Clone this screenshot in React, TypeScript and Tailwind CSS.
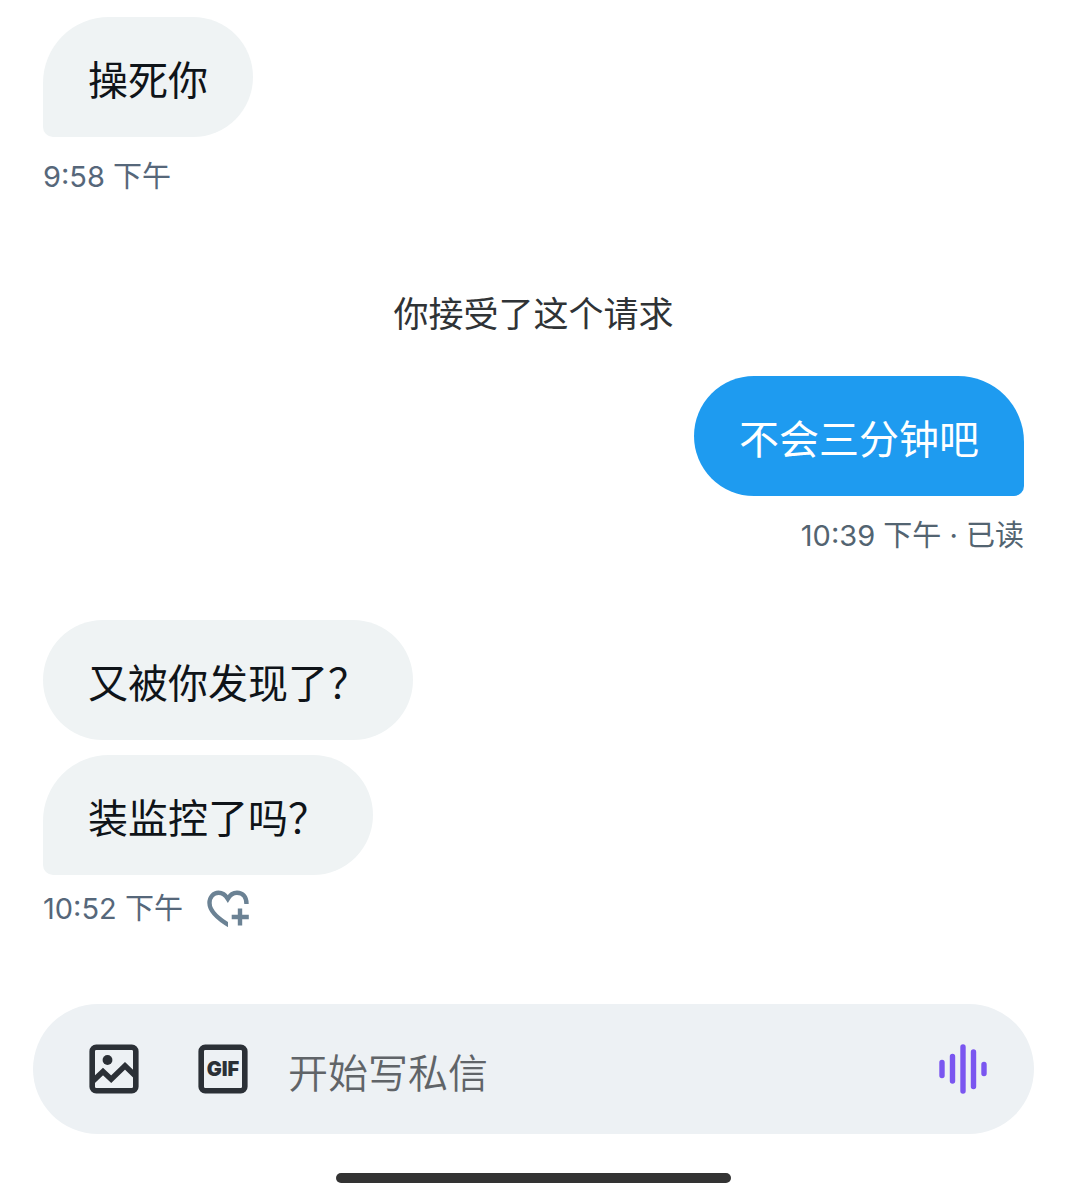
import React from "react";

type BubbleProps = { text: string; shape: "leftTail" | "rightTail" | "round" };

const bubbleStyles = {
  leftTail: "rounded-[60px] rounded-tl-[66px] rounded-bl-[10px] bg-[#eff3f4] text-[#0f1419]",
  rightTail: "rounded-[60px] rounded-tr-[66px] rounded-br-[10px] bg-[#1e9bf0] text-white",
  round: "rounded-[60px] bg-[#eff3f4] text-[#0f1419]",
};

function Bubble({ text, shape }: BubbleProps) {
  return (
    <p className={`w-fit px-[45px] pt-[34px] pb-[26px] text-[40px] leading-[60px] ${bubbleStyles[shape]}`}>
      {text}
    </p>
  );
}

function HeartPlusIcon() {
  return (
    <svg viewBox="0 0 42 38" className="h-[38px] w-[42px]" fill="none" stroke="#6b8294" strokeWidth="4.4" aria-hidden="true">
      <clipPath id="heart-cut">
        <path d="M0 0H42V14H21V38H0Z" />
      </clipPath>
      <path
        clipPath="url(#heart-cut)"
        d="M25 37C10 28.500 2.500 21 2.500 13C2.500 7 6.500 2.800 11.500 2.800C15.500 2.800 18.500 5 20.800 8.800C23 5 26 2.800 30 2.800C35.500 2.800 39.500 6.500 39.500 14"
      />
      <path d="M33 18.500V35.500M24.700 27H41.800" />
    </svg>
  );
}

function PictureIcon() {
  return (
    <svg viewBox="0 0 50 50" className="size-[50px]" fill="none" stroke="#2b3036" aria-hidden="true">
      <rect x="3.200" y="3.200" width="43.600" height="43.600" rx="4" strokeWidth="5.600" />
      <circle cx="18.500" cy="16" r="4.900" fill="#2b3036" stroke="none" />
      <path d="M4 37L14 27.500L22.200 35.200L36 21.800L46 31.500" strokeWidth="5.600" />
    </svg>
  );
}

function GifIcon() {
  return (
    <svg viewBox="0 0 50 50" className="size-[50px]" aria-hidden="true">
      <rect x="3.200" y="3.200" width="43.600" height="43.600" rx="4" fill="none" stroke="#2b3036" strokeWidth="5.600" />
      <text x="25" y="32" textAnchor="middle" fontSize="20" fontWeight="900" fontFamily="Inter, sans-serif" fill="#2b3036">
        GIF
      </text>
    </svg>
  );
}

function VoiceIcon() {
  return (
    <svg viewBox="0 0 48 50" className="h-[50px] w-12" stroke="#7a56f0" strokeWidth="5.400" strokeLinecap="round" aria-hidden="true">
      <path d="M3 18.500V31.500M13.500 12.500V37M24 3V47M34.500 8V42.500M45 20.500V29.500" />
    </svg>
  );
}

export default function App() {
  return (
    <div className="flex min-h-screen flex-col bg-white font-['Inter','Noto_Sans_CJK_SC',sans-serif]">
      <main className="flex flex-1 flex-col px-[43px] pt-[17px]" lang="zh-CN">
        <Bubble text="操死你" shape="leftTail" />
        <time className="mt-4 text-[29px] leading-[48px] text-[#56677a]">9:58 下午</time>

        <p className="mt-[87px] text-center text-[35px] leading-[52px] text-[#2f3336]">你接受了这个请求</p>

        <div className="mt-9 flex flex-col items-end">
          <Bubble text="不会三分钟吧" shape="rightTail" />
          <p className="mt-4 text-[29px] leading-[48px] text-[#536471]">
            <time>10:39 下午</time> · 已读
          </p>
        </div>

        <div className="mt-[60px] flex flex-col gap-[15px]">
          <Bubble text="又被你发现了？" shape="round" />
          <Bubble text="装监控了吗？" shape="leftTail" />
        </div>
        <div className="mt-[10px] flex items-center gap-6">
          <time className="text-[29px] leading-[48px] text-[#56677a]">10:52 下午</time>
          <button type="button" aria-label="添加回应">
            <HeartPlusIcon />
          </button>
        </div>
      </main>

      <form className="mx-[33px] flex h-[130px] items-center rounded-full bg-[#edf1f4] pr-[47px] pl-14">
        <button type="button" aria-label="图片">
          <PictureIcon />
        </button>
        <button type="button" aria-label="GIF" className="ml-[59px]">
          <GifIcon />
        </button>
        <input
          type="text"
          aria-label="开始写私信"
          placeholder="开始写私信"
          className="mx-10 h-[66px] min-w-0 flex-1 bg-transparent pt-2 text-[40px] font-[350] text-[#0f1419] outline-none placeholder:text-[#606468]"
        />
        <button type="button" aria-label="语音">
          <VoiceIcon />
        </button>
      </form>
      <div className="mx-auto mt-[39px] mb-[17px] h-[10px] w-[37%] rounded-full bg-[#333333]" />
    </div>
  );
}
